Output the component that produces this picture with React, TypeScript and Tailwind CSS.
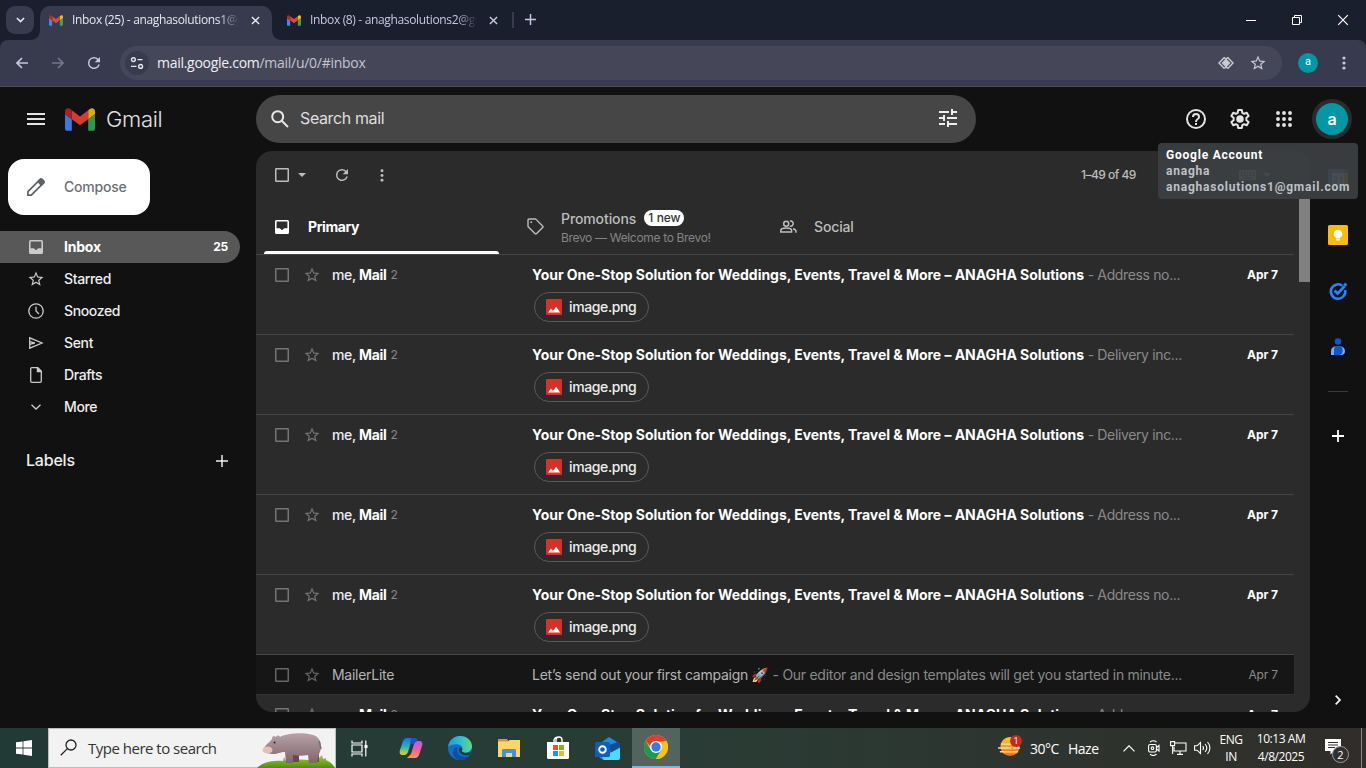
import React from "react";

type IconProps = { className?: string };

const GmailMark = ({ className = "" }: IconProps) => (
  <svg viewBox="52 42 88 66" className={className}>
    <path fill="#4285f4" d="M58 108h14V74L52 59v43c0 3.32 2.69 6 6 6" />
    <path fill="#34a853" d="M120 108h14c3.32 0 6-2.69 6-6V59l-20 15" />
    <path fill="#fbbc04" d="M120 48v26l20-15v-8c0-7.42-8.47-11.65-14.4-7.2" />
    <path fill="#ea4335" d="M72 74V48l24 18 24-18v26L96 92" />
    <path fill="#c5221f" d="M52 51v8l20 15V48l-5.6-4.2c-5.94-4.45-14.4-.22-14.4 7.2" />
  </svg>
);

const Close = ({ className = "" }: IconProps) => (
  <svg viewBox="0 0 10 10" className={className} stroke="currentColor" fill="none">
    <path d="M1 1l8 8M9 1l-8 8" />
  </svg>
);

const Plus = ({ className = "" }: IconProps) => (
  <svg viewBox="0 0 12 12" className={className} fill="none" stroke="currentColor">
    <path d="M6 0v12M0 6h12" />
  </svg>
);

const Reload = ({ className = "" }: IconProps) => (
  <svg viewBox="0 0 24 24" className={className} fill="currentColor">
    <path d="M17.65 6.35A7.96 7.96 0 0 0 12 4a8 8 0 1 0 7.73 10h-2.08A6 6 0 1 1 12 6c1.66 0 3.14.69 4.22 1.78L13 11h7V4z" />
  </svg>
);

const Star = ({ className = "" }: IconProps) => (
  <svg viewBox="0 0 24 24" className={className} fill="currentColor">
    <path d="M22 9.24l-7.19-.62L12 2 9.19 8.63 2 9.24l5.46 4.73L5.82 21 12 17.27 18.18 21l-1.63-7.03zM12 15.4l-3.76 2.27 1-4.28-3.32-2.88 4.38-.38L12 6.1l1.71 4.04 4.38.38-3.32 2.88 1 4.28z" />
  </svg>
);

const Dots = ({ className = "" }: IconProps) => (
  <svg viewBox="0 0 4 14" className={className} fill="currentColor">
    <circle cx="2" cy="2" r="1.6" />
    <circle cx="2" cy="7" r="1.6" />
    <circle cx="2" cy="12" r="1.6" />
  </svg>
);

const InboxIcon = ({ className = "" }: IconProps) => (
  <svg viewBox="0 0 14 14" className={className} fill="currentColor" fillRule="evenodd">
    <path d="M1.5 0h11A1.5 1.5 0 0 1 14 1.5v11a1.5 1.5 0 0 1-1.5 1.5h-11A1.5 1.5 0 0 1 0 12.5v-11A1.5 1.5 0 0 1 1.5 0zM1.6 1.6v6.6h3.2L7 10.2l2.2-2h3.2V1.6z" />
  </svg>
);

const Box = ({ className = "" }: IconProps) => (
  <svg viewBox="0 0 14 14" className={className} fill="none" stroke="currentColor" strokeWidth="1.5">
    <rect x=".75" y=".75" width="12.5" height="12.5" rx=".6" />
  </svg>
);

function BrowserTab({ title, active }: { title: string; active?: boolean }) {
  return (
    <div className={`relative flex items-center pb-[6px] ${active ? "h-[34px] w-[232px] rounded-t-[10px] bg-[#383b4d] pl-[9px]" : "h-[34px] w-[240px] pl-[15px]"}`}>
      {active && (
        <>
          <svg viewBox="0 0 10 10" className="absolute bottom-0 -left-[10px] size-[10px]"><path fill="#383b4d" d="M10 0v10H0C6 10 10 6 10 0z" /></svg>
          <svg viewBox="0 0 10 10" className="absolute -right-[10px] bottom-0 size-[10px]"><path fill="#383b4d" d="M0 0v10h10C4 10 0 6 0 0z" /></svg>
        </>
      )}
      <GmailMark className="h-[11px] w-[14px]" />
      <span className={`ml-[9px] w-[167px] overflow-hidden font-['Open_Sans','Noto_Sans',sans-serif] text-[12px] whitespace-nowrap [mask-image:linear-gradient(to_right,#000_88%,transparent)] tracking-[-0.34px] ${active ? "text-[#e6e7f0]" : "text-[#c5c8e0]"}`}>{title}</span>
      <Close className={`ml-[12px] size-[9px] [stroke-width:1.6] ${active ? "text-[#e6e7f0]" : "text-[#c5c8e0]"}`} />
    </div>
  );
}

function Chrome() {
  return (
    <>
      <div className="flex h-10 shrink-0 items-end bg-[#1a1f2e]">
        <div className="mb-[6px] ml-[6px] flex size-7 items-center justify-center rounded-[9px] bg-[#383b4d]">
          <svg viewBox="0 0 10 6" className="h-[6px] w-[9px]" fill="none" stroke="#e6e7f0" strokeWidth="1.8"><path d="M1 .8l4 4 4-4" /></svg>
        </div>
        <div className="w-[6px]" />
        <BrowserTab title="Inbox (25) - anaghasolutions1@gmail.com" active />
        <BrowserTab title="Inbox (8) - anaghasolutions2@gmail.com" />
        <div className="mb-[12px] h-4 w-[2px] bg-[#383b4d]" />
        <Plus className="mb-[15px] ml-[11px] size-[11px] text-[#c5c8e0] [stroke-width:1.6]" />
        <div className="ml-auto flex h-10 items-center text-white">
          <div className="flex w-[46px] justify-center"><div className="h-px w-[10px] bg-white" /></div>
          <div className="flex w-[46px] justify-center">
            <svg viewBox="0 0 10 10" className="size-[10px]" fill="none" stroke="currentColor"><path d="M.5 2.5h7v7h-7zM2.5 2.5v-2h7v7h-2" /></svg>
          </div>
          <div className="flex w-[46px] justify-center"><Close className="size-3 [stroke-width:1]" /></div>
        </div>
      </div>
      <div className="flex h-[47px] shrink-0 items-center bg-[#1a1f2e]">
        <div className="flex h-full w-full items-center rounded-t-[8px] border-b border-[#4a4c5c] bg-[#383b4d]">
          <svg viewBox="0 0 12 12" className="ml-4 size-3" fill="none" stroke="#c5c8e0" strokeWidth="1.6"><path d="M12 6H1M6 1L1 6l5 5" /></svg>
          <svg viewBox="0 0 12 12" className="ml-6 size-3" fill="none" stroke="#74778b" strokeWidth="1.6"><path d="M0 6h11M6 1l5 5-5 5" /></svg>
          <Reload className="ml-[21px] size-[18px] text-[#c5c8e0]" />
          <div className="ml-[17px] flex h-[34px] w-[1162px] items-center rounded-full bg-[#454759] pr-[15px] pl-[5px]">
            <div className="flex size-6 items-center justify-center rounded-full bg-[#383b4d]">
              <svg viewBox="0 0 14 14" className="size-[14px]" fill="none" stroke="#e6e7f0" strokeWidth="1.4"><circle cx="3.4" cy="3.6" r="1.9" /><path d="M7.5 3.6h5M1 10.4h5.5" /><circle cx="10.6" cy="10.4" r="1.9" /></svg>
            </div>
            <span className="ml-2 pb-px font-['Open_Sans','Noto_Sans',sans-serif] text-[14px] tracking-[-0.28px] text-[#f0f0f5]">mail.google.com<span className="text-[#c3c5cf]">/mail/u/0/#inbox</span></span>
            <svg viewBox="0 0 16 14" className="ml-auto h-[14px] w-4" fill="none" stroke="#c9cad3" strokeWidth="1.4"><path d="M6.3 1.5L1 7l5.300 5.500M9.700 1.500L15 7l-5.300 5.500M6.300 1.500L8 3.200l1.700-1.700M6.300 12.500L8 10.800l1.700 1.700" /><path d="M8 3.500L11.500 7 8 10.500 4.500 7z" fill="#c9cad3" /></svg>
            <Star className="ml-[15px] size-[18px] text-[#c9cad3]" />
          </div>
          <div className="ml-4 flex size-5 items-center justify-center rounded-full bg-[#0097a7] pb-px font-['Roboto',sans-serif] text-[11px] text-white">a</div>
          <Dots className="ml-6 h-[14px] w-1 text-[#c5c8e0]" />
        </div>
      </div>
    </>
  );
}

function Header() {
  return (
    <header className="flex h-16 shrink-0 items-center">
      <svg viewBox="0 0 18 12" className="ml-[27px] h-3 w-[18px]" fill="#e3e3e3"><path d="M0 0h18v2H0zM0 5h18v2H0zM0 10h18v2H0z" /></svg>
      <GmailMark className="ml-5 h-[23px] w-[30px] brightness-90" />
      <span className="ml-[11px] w-[150px] font-['Inter',sans-serif] text-[22px] leading-none font-light tracking-[-0.3px] text-[#e3e3e3]">Gmail</span>
      <div className="flex h-12 w-[720px] items-center rounded-full bg-[#464646] pr-[19px] pl-[15px]">
        <svg viewBox="0 0 18 18" className="size-[18px]" fill="none" stroke="#e8e8e8" strokeWidth="2"><circle cx="6.700" cy="6.700" r="5.500" /><path d="M10.700 10.700L17 17" /></svg>
        <span className="ml-[11px] pb-[2px] font-['Inter',sans-serif] text-[16px] tracking-[-0.38px] text-[#dedede]">Search mail</span>
        <svg viewBox="0 0 18 18" className="mb-[2px] ml-auto size-[18px]" fill="#eee"><path d="M0 14v2h6v-2zM0 2v2h10V2zM10 18v-2h8v-2h-8v-2H8v6zM4 6v2H0v2h4v2h2V6zM18 10V8H8v2zM12 6h2V4h4V2h-4V0h-2z" /></svg>
      </div>
      <div className="ml-auto flex items-center pr-[14px] text-[#e3e3e3]">
        <svg viewBox="2 2 20 20" className="size-5" fill="currentColor"><path d="M11 18h2v-2h-2zm1-16a10 10 0 1 0 0 20 10 10 0 0 0 0-20m0 18a8 8 0 1 1 0-16 8 8 0 0 1 0 16m0-14a4 4 0 0 0-4 4h2a2 2 0 1 1 4 0c0 2-3 1.750-3 5h2c0-2.250 3-2.500 3-5a4 4 0 0 0-4-4" /></svg>
        <svg viewBox="0 0 24 24" className="ml-[22px] size-6" fill="none" stroke="currentColor" strokeWidth="2">
          <path strokeLinejoin="round" d="M10.200 2.500h3.600l.5 2.800 1.800 1 2.700-1 1.800 3.200-2.200 1.800v2.400l2.200 1.800-1.800 3.200-2.700-1-1.800 1-.5 2.800h-3.600l-.5-2.800-1.800-1-2.700 1-1.800-3.200 2.200-1.800v-2.400L3.400 8.500l1.800-3.200 2.700 1 1.800-1z" transform="translate(0 .5)" />
          <circle cx="12" cy="12" r="2.800" fill="currentColor" />
        </svg>
        <svg viewBox="0 0 16 16" className="ml-6 size-4" fill="currentColor">
          {[2, 8, 14].map((y) => [2, 8, 14].map((x) => <circle key={`${x}-${y}`} cx={x} cy={y} r="1.950" />))}
        </svg>
        <div className="ml-5 flex size-10 items-center justify-center rounded-full bg-[#2b2b2b]">
          <div className="flex size-8 items-center justify-center rounded-full bg-[#0097a7] pb-px font-['Inter',sans-serif] text-[16px] font-semibold text-white">a</div>
        </div>
      </div>
    </header>
  );
}

const navItems: { label: string; icon: React.ReactNode; count?: string }[] = [
  { label: "Inbox", count: "25", icon: <InboxIcon className="size-[14px]" /> },
  { label: "Starred", icon: <Star className="size-[18px]" /> },
  { label: "Snoozed", icon: <svg viewBox="0 0 16 16" className="size-4" fill="none" stroke="currentColor" strokeWidth="1.300"><circle cx="8" cy="8" r="7.200" /><path d="M8 3.500V8l3 3" /></svg> },
  { label: "Sent", icon: <svg viewBox="0 0 16 14" className="h-[14px] w-4" fill="none" stroke="currentColor" strokeWidth="1.300"><path d="M1.700 1.800v10.400L14 7zM1.700 5.700L6.800 7l-5.100 1.300" /></svg> },
  { label: "Drafts", icon: <svg viewBox="0 0 12 16" className="h-4 w-3" fill="none" stroke="currentColor" strokeWidth="1.300"><path d="M1.800.700h6l3.500 3.500v9.900c0 .6-.4 1.200-1.100 1.200H1.800c-.7 0-1.100-.5-1.100-1.200V1.800C.7 1.100 1.200.7 1.800.7z" /><path d="M7.400.7v3.900h3.900z" fill="currentColor" /></svg> },
  { label: "More", icon: <svg viewBox="0 0 10 6" className="h-[6px] w-[10px]" fill="none" stroke="currentColor" strokeWidth="1.300"><path d="M.5.7L5 5 9.500.7" /></svg> },
];

function Sidebar() {
  return (
    <aside className="w-64 shrink-0 pt-2 font-['Inter',sans-serif]">
      <div className="ml-2 flex h-14 w-[142px] items-center rounded-2xl bg-white pl-[19px]">
        <svg viewBox="0 0 18 18" className="size-[18px]" fill="none" stroke="#5f6368" strokeWidth="1.700"><path d="M.900 17.100v-3.400L13.200 1.400a1.400 1.400 0 0 1 2 0l1.400 1.400a1.400 1.400 0 0 1 0 2L4.300 17.100z" /><path fill="#5f6368" d="M11 3.600L13.600 1l3.400 3.400L14.400 7z" /></svg>
        <span className="ml-[19px] pb-[2px] text-[14px] font-medium tracking-[-0.2px] text-[#6b6f73]">Compose</span>
      </div>
      <nav className="mt-4">
        {navItems.map((item, i) => (
          <div key={item.label} className={`flex h-8 w-60 items-center rounded-r-full pr-3 ${i === 0 ? "bg-[#585858]" : ""}`}>
            <span className="ml-[26px] flex w-5 justify-center text-[#cacaca]">{item.icon}</span>
            <span className={`ml-[18px] pb-[2px] text-[14px] ${i === 0 ? "font-bold tracking-[-0.2px] text-white" : "font-medium tracking-[-0.35px] text-[#eee]"}`}>{item.label}</span>
            {item.count && <span className="ml-auto text-[12px] font-bold tracking-[-0.2px] text-white">{item.count}</span>}
          </div>
        ))}
      </nav>
      <div className="mt-[26px] flex h-[24px] items-center pr-7 pl-[26px] text-[#eee]">
        <span className="pb-[2px] text-[16px] font-medium tracking-[-0.2px]">Labels</span>
        <Plus className="ml-auto size-3 [stroke-width:1.500]" />
      </div>
    </aside>
  );
}

function MailTabs() {
  return (
    <div className="flex h-14 shrink-0 border-b border-[#454545] text-[#bdbdbd]">
      <div className="flex w-[253px] flex-col pl-2">
        <div className="flex h-[53px] w-[235px] items-center pt-[3px] pl-[11px] text-white">
          <InboxIcon className="size-[14px]" />
          <span className="ml-[19px] text-[14px] font-bold tracking-[-0.4px]">Primary</span>
        </div>
        <div className="h-[3px] w-[235px] shrink-0 rounded-t-[3px] bg-white" />
      </div>
      <div className="flex w-[253px] items-center pl-[18px]">
        <svg viewBox="0 0 17 17" className="size-[17px]" fill="none" stroke="currentColor" strokeWidth="1.400"><path d="M1 2.200C1 1.500 1.500 1 2.200 1h6c.4 0 .7.100.9.400l6.500 6.500c.5.500.5 1.200 0 1.700l-6 6c-.5.500-1.200.500-1.700 0L1.400 9.100A1.200 1.200 0 0 1 1 8.200z" /><circle cx="4.200" cy="4.200" r=".9" fill="currentColor" stroke="none" /></svg>
        <div className="ml-[17px] pt-[3px]">
          <div className="flex h-5 items-center text-[14px] font-medium tracking-[-0.1px]">Promotions
            <span className="ml-2 flex h-4 items-center rounded-full bg-white px-1 text-[12px] tracking-[-0.25px] [word-spacing:1px] text-[#333]">1 new</span>
          </div>
          <div className="h-5 text-[12px] leading-5 tracking-[-0.33px] text-[#858585]">Brevo — Welcome to Brevo!</div>
        </div>
      </div>
      <div className="flex items-center pl-[18px]">
        <svg viewBox="0 0 17 13" className="h-[13px] w-[17px]" fill="none" stroke="currentColor" strokeWidth="1.500"><circle cx="6.200" cy="3.700" r="2.500" /><path d="M.8 12V10.600c0-1.600 3-2.500 5.400-2.500s5.400.9 5.400 2.500V12zM9.800 1c2.600-.4 3.600 1.400 3.300 3-.2 1.300-1.400 2.400-3.300 2.200M13 8.700c1.800.5 2.900 1.100 2.900 2.200v1.800" /></svg>
        <span className="ml-[17px] text-[14px] font-medium tracking-[-0.15px]">Social</span>
      </div>
    </div>
  );
}

function ThreadRow({ snippet }: { snippet: string }) {
  return (
    <div className="flex h-20 shrink-0 border-b border-[#454545] pt-[10px] pr-4 pl-[19px]">
      <div className="flex h-5 w-[257px] shrink-0 items-center text-[#757575]">
        <Box className="size-[14px]" />
        <Star className="ml-[14px] size-[18px]" />
        <span className="ml-[11px] pb-[2px] text-[14px] font-medium tracking-[-0.36px] text-[#eee]">me, <b className="text-white">Mail</b></span>
        <span className="ml-1 text-[12px] text-[#8a8a8a]">2</span>
      </div>
      <div className="flex-1">
        <div className="h-5 w-[655px] text-[14px] leading-5 whitespace-nowrap text-[#8a8a8a]"><b className="tracking-[-0.037px] text-white">Your One-Stop Solution for Weddings, Events, Travel &amp; More – ANAGHA Solutions</b><span className="tracking-[-0.36px]"> - {snippet}</span></div>
        <div className="mt-[7px] ml-[2px] flex h-[30px] w-[115px] items-center rounded-full border border-[#5a5a5a] pl-[11px]">
          <svg viewBox="0 0 16 16" className="size-4"><rect width="16" height="16" rx="1" fill="#d93025" /><path fill="#fff" d="M2 13.500l3-4 2 2.200 3.200-4 4 5.800z" /></svg>
          <span className="ml-[7px] pb-[2px] text-[14px] font-medium tracking-[-0.38px] text-[#eee]">image.png</span>
        </div>
      </div>
      <span className="h-5 text-[12px] leading-5 font-bold tracking-[-0.05px] text-white">Apr 7</span>
    </div>
  );
}

function MailPanel() {
  return (
    <main className="flex h-[561px] w-[1054px] shrink-0 overflow-hidden rounded-2xl bg-[#2b2b2b] font-['Inter',sans-serif]">
      <div className="flex w-[1038px] flex-col">
        <div className="flex h-12 shrink-0 items-center pl-[19px] text-[#bdbdbd]">
          <Box className="size-[14px]" />
          <svg viewBox="0 0 8 4" className="ml-[9px] h-1 w-2" fill="currentColor"><path d="M0 0h8L4 4z" /></svg>
          <Reload className="ml-[27px] size-[18px]" />
          <Dots className="ml-[29px] h-[13px] w-1" />
          <span className="ml-auto w-[57px] text-[12px] font-medium tracking-[-0.52px] whitespace-nowrap">1–49 of 49</span>
          <svg viewBox="0 0 6 10" className="ml-[31px] h-[10px] w-[6px]" fill="none" stroke="#555"><path d="M5 1L1 5l4 4" /></svg>
          <svg viewBox="0 0 6 10" className="ml-[34px] h-[10px] w-[6px]" fill="none" stroke="#555"><path d="M1 1l4 4-4 4" /></svg>
          <svg viewBox="0 0 32 10" className="mr-[23px] ml-6 h-[10px] w-8" fill="#bdbdbd"><path fillRule="evenodd" d="M0 0h17v10H0zM2 2v1.500h1.500V2zm3 0v1.500h1.500V2zm3 0v1.500h1.500V2zm3 0v1.500h1.500V2zm3 0v1.500h1.500V2zM2 4.500V6h1.500V4.500zm3 0V6h1.500V4.500zm3 0V6h1.500V4.500zm3 0V6h1.500V4.500zm3 0V6h1.500V4.500zM4 7.300v1.200h9V7.300zM24 3h8l-4 4z" /></svg>
        </div>
        <MailTabs />
        <div className="h-[457px] overflow-hidden">
          <ThreadRow snippet="Address no..." />
          <ThreadRow snippet="Delivery inc..." />
          <ThreadRow snippet="Delivery inc..." />
          <ThreadRow snippet="Address no..." />
          <ThreadRow snippet="Address no..." />
          <div className="flex h-10 items-center border-b border-[#333] bg-[#161616] pr-4 pl-[19px] text-[14px] text-[#b4b4b4]">
            <Box className="size-[14px] text-[#666]" />
            <Star className="ml-[14px] size-[18px] text-[#666]" />
            <span className="ml-[11px] w-[200px] tracking-[-0.28px]">MailerLite</span>
            <span className="whitespace-nowrap tracking-[-0.245px]">Let’s send out your first campaign <span className="font-['Noto_Color_Emoji',sans-serif]">🚀</span><span className="tracking-[-0.285px] text-[#8a8a8a]"> - Our editor and design templates will get you started in minute...</span></span>
            <span className="ml-auto text-[12px] tracking-[-0.15px] text-[#8a8a8a]">Apr 7</span>
          </div>
          <ThreadRow snippet="Address no..." />
        </div>
      </div>
      <div className="ml-[5px] w-[11px] pt-12"><div className="h-[83px] bg-[#808080]" /></div>
    </main>
  );
}

function SideRail() {
  return (
    <div className="flex w-14 flex-col items-center pt-[18px] pb-[23px]">
      <svg viewBox="0 0 20 20" className="size-5"><path fill="#4285f4" d="M0 1.500Q0 0 1.500 0H16v4H4v12H0z" /><path fill="#fbbc04" d="M16 4h4v12h-4z" /><path fill="#1967d2" d="M16 0h2.500Q20 0 20 1.500V4h-4z" /><path fill="#34a853" d="M4 16h12v4H4z" /><path fill="#188038" d="M0 16h4v4H1.500Q0 20 0 18.500z" /><path fill="#ea4335" d="M16 16h4l-4 4z" /><path fill="#fff" d="M4 4h12v12H4z" /><text x="10" y="13.500" textAnchor="middle" fontSize="9.500" fontWeight="700" fontFamily="Roboto" fill="#4285f4">31</text></svg>
      <svg viewBox="0 0 20 20" className="mt-9 size-5"><rect width="20" height="20" rx="1.500" fill="#fbbc04" /><circle cx="10" cy="9" r="4.300" fill="#fff" /><path fill="#fff" d="M8 11h4v2.500H8zM8 14.200h4v1.300H8z" /></svg>
      <svg viewBox="0 0 20 20" className="mt-9 size-5" fill="none" stroke="#2684fc"><path strokeWidth="2.600" d="M14.300 4.700a7.200 7.200 0 1 0 2.800 4.300" /><path strokeWidth="2.800" d="M6.600 9.600l3 3 7-7.400" /><circle cx="17.300" cy="3.700" r="1.300" fill="#2684fc" /></svg>
      <svg viewBox="0 0 20 20" className="mt-9 size-5"><circle cx="10" cy="4.500" r="3.300" fill="#0b57d0" /><path fill="#7baaf7" d="M3 18v-4a4.500 4.500 0 0 1 4.500-4.500h5A4.500 4.500 0 0 1 17 14a4 4 0 0 1-4 4z" /><path fill="#0b57d0" d="M6 18v-5.500c0-2 1-3 2.500-3h3c2 0 3.200 1.500 3.200 4s-1.400 4.500-3.700 4.500z" /></svg>
      <div className="mt-[34px] h-px w-5 bg-[#3a3a3a]" />
      <Plus className="mt-[38px] size-3 text-white [stroke-width:1.800]" />
      <svg viewBox="0 0 6 10" className="mt-auto h-[10px] w-[6px]" fill="none" stroke="#eee" strokeWidth="1.800"><path d="M.7.700L5 5 .7 9.300" /></svg>
    </div>
  );
}

const Hippo = () => (
  <svg viewBox="0 0 78 38" className="h-[38px] w-[78px]">
    <defs>
      <linearGradient id="hide" x1="0" y1="0" x2="0" y2="1"><stop offset="0" stopColor="#b8a2a9" /><stop offset="1" stopColor="#80646c" /></linearGradient>
      <linearGradient id="grass" x1="0" y1="0" x2="0" y2="1"><stop offset="0" stopColor="#a9cf2b" /><stop offset="1" stopColor="#4c8c12" /></linearGradient>
    </defs>
    <path fill="url(#grass)" d="M0 38c6-6 16-8 26-7l1-4 2 4 4-2 20 1 9-2 3-3 1 4 3-1v2c4 2 7 4 9 8z" />
    <path fill="#654b51" d="M36 23h6v9h-6zM58 22h4v10h-4z" />
    <path fill="url(#hide)" d="M7 19c0-3 4-5 8-10 0-2 1-3 2-3s1 1 2 1c1-2 3-2 4 0C32 2 54 2 60 7c5 4 5 12 2 17l-2 9h-8l-1-8c-5 1-10 1-15 0v8h-7l-1-11c-5 0-7 2-11 2-5 0-10-1-10-5z" />
    <ellipse cx="10.500" cy="20" rx="5" ry="3.600" fill="#e3c0b6" />
    <circle cx="17.500" cy="12.500" r="1" fill="#2e2225" /><path d="M62 11l2 8" stroke="#886c73" strokeWidth="1.500" />
  </svg>
);

function Taskbar() {
  return (
    <footer className="flex h-10 shrink-0 items-center bg-linear-to-r from-[#213a36] via-[#293c35] to-[#302d2a] font-['Open_Sans','Noto_Sans',sans-serif] text-white">
      <svg viewBox="0 0 16 16" className="mx-4 size-4" fill="#fff"><path d="M0 2.300L6.600 1.400v6.200H0zM7.400 1.300L16 0v7.600H7.400zM0 8.400h6.600v6.200L0 13.700zM7.400 8.400H16V16l-8.600-1.300z" /></svg>
      <div className="flex h-10 w-72 items-end border border-[#bdbdbd] bg-[#f2f2f2] pl-[11px]">
        <svg viewBox="0 0 17 17" className="mb-[11px] size-[17px]" fill="none" stroke="#222" strokeWidth="1.300"><circle cx="11" cy="6" r="5" /><path d="M7.400 9.600L.8 16.200" /></svg>
        <span className="mb-[8px] ml-[11px] text-[15px] tracking-[-0.5px] whitespace-nowrap text-[#333]">Type here to search</span>
        <div className="-mb-px ml-auto"><Hippo /></div>
      </div>
      <svg viewBox="0 0 17 16" className="ml-[15px] size-[17px]" fill="none" stroke="#fff" strokeWidth="1.200"><path d="M1 0v2.500h10V0M1 4.500h10v7H1zM1 16v-2.500h10V16M14.800 0v16" /><path fill="#fff" d="M13.500 4.500h3v3h-3z" stroke="none" /></svg>
      <div className="ml-[19px] flex items-center">
        <div className="flex w-[49px] justify-center pr-[2px]">
          <svg viewBox="0 0 24 22" className="h-[22px] w-6">
            <defs><linearGradient id="cpa" x1="0" y1="0" x2="0" y2="1"><stop stopColor="#1a6fe8" /><stop offset=".5" stopColor="#22b7b5" /><stop offset="1" stopColor="#f0d020" /></linearGradient><linearGradient id="cpb" x1="0" y1="0" x2="0" y2="1"><stop stopColor="#b45cf2" /><stop offset=".5" stopColor="#f2609a" /><stop offset="1" stopColor="#fb9b4a" /></linearGradient></defs>
            <path fill="url(#cpa)" d="M8 1h8l-4 4-3 10c-1 2-2 3-4 3H4c-3 0-4-2-3-5l3-9c1-2 2-3 4-3z" />
            <path fill="url(#cpb)" d="M16 21H8l4-4 3-10c1-2 2-3 4-3h1c3 0 4 2 3 5l-3 9c-1 2-2 3-4 3z" />
            <path fill="#1756c8" d="M12 1h4c2 0 2 2 3 3-3 0-3 1-4 3h-4z" />
          </svg>
        </div>
        <div className="flex w-[49px] justify-center pr-[2px]">
          <svg viewBox="0 0 24 24" className="size-6">
            <defs><linearGradient id="ea" x1="0" y1="0" x2="1" y2="0"><stop stopColor="#1b9de2" /><stop offset=".6" stopColor="#35c1d0" /><stop offset="1" stopColor="#62de6a" /></linearGradient></defs>
            <circle cx="12" cy="12" r="12" fill="#0f6fc6" />
            <path fill="url(#ea)" d="M0 11C1 4 6 0 12 0c7 0 12 5 12 10 0 4-3 6.500-6.500 6.500-3 0-4.500-1-3.500-2.500 1-2 0-5-4-5.500C6 8 2 9 0 11z" />
            <path fill="#0c4f9c" d="M9 12c-1 5 3 9 8 9 2 0 4-1 5-2-2 3-6 5-10 5-5-1-8-5-7-9 1-3 3-4 5-4z" />
            <path fill="#283c36" d="M14.500 13.500c-1.500 1-.5 3.500 4 3.500 2 0 3.500-.700 4.500-1.700l-1 3.200c-5 2.500-11-.5-11-4.500 0-2 1.500-3 3-2z" />
          </svg>
        </div>
        <div className="flex w-[49px] justify-center pr-[2px]">
          <svg viewBox="0 0 22 18" className="h-[18px] w-[22px]"><path fill="#d99a12" d="M0 0h9l2 3H0z" /><path fill="#ffd766" d="M0 2.500h10L11.500 1H22v17H0z" /><path fill="#3f93dc" d="M4 18v-6.500C4 10.500 4.500 10 5.500 10h11c1 0 1.500.5 1.500 1.500V18h-4v-4H8v4z" /></svg>
        </div>
        <div className="flex w-[49px] justify-center pr-[2px]">
          <svg viewBox="0 0 24 24" className="size-6"><path d="M8 7V4a3 3 0 0 1 4-2.500M16 7V4a3 3 0 0 0-6 0v3" fill="none" stroke="#fff" strokeWidth="1.400" /><path fill="#fff" d="M1 6h22v15.500a1.500 1.500 0 0 1-1.500 1.500h-19A1.500 1.500 0 0 1 1 21.500z" /><path fill="#f25022" d="M7 9h5v5H7z" /><path fill="#7fba00" d="M13 9h5v5h-5z" /><path fill="#00a4ef" d="M7 15h5v5H7z" /><path fill="#ffb900" d="M13 15h5v5h-5z" /></svg>
        </div>
        <div className="flex w-[49px] justify-center pr-px">
          <svg viewBox="0 0 25 23" className="h-[23px] w-[25px]"><path fill="#1490df" d="M4 7L14 0l11 7v14l-2 2H8l-4-3z" /><path fill="#0a4f9e" d="M14 8l9-3 2 2v3l-9 6z" /><path fill="#50d9ff" d="M7 20l18-9v10a2 2 0 0 1-2 2H9z" /><rect y="5" width="15" height="15" rx="1.500" fill="#0f5fb8" /><circle cx="7.500" cy="12.500" r="3.300" fill="none" stroke="#fff" strokeWidth="1.900" /></svg>
        </div>
        <div className="flex h-10 w-12 items-center justify-center border-b-2 border-[#76b9ed] bg-[#53645f]">
          <svg viewBox="0 0 24 24" className="size-6"><circle cx="12" cy="12" r="12" fill="#fbc116" /><path fill="#e33b2e" d="M1.600 6A12 12 0 0 1 22.400 6H12v12z" /><path fill="#1f9a4d" d="M1.600 6A12 12 0 0 0 12 24l5.200-9L12 12 7 15z" /><path fill="#fbc116" d="M12 24l5.200-9V6h5.200A12 12 0 0 1 12 24z" /><path fill="#e33b2e" d="M12 6h10.400L12 7z" /><circle cx="12" cy="12" r="6" fill="#fff" /><circle cx="12" cy="12" r="4.700" fill="#2f7cf0" /></svg>
        </div>
      </div>
      <div className="ml-auto flex h-full items-center">
        <div className="relative mr-[9px] mb-1">
          <svg viewBox="0 0 23 22" className="h-[21px] w-[23px]"><defs><linearGradient id="sun" x1="0" y1="0" x2="0" y2="1"><stop stopColor="#ffc928" /><stop offset="1" stopColor="#f36c13" /></linearGradient></defs><circle cx="12" cy="11" r="10" fill="url(#sun)" /><path d="M3 8.500h12M0 12.500h13M16 12.500h6M2 16.500h18" stroke="#f7dfac" strokeWidth="1.500" strokeLinecap="round" /></svg>
          <span className="absolute -top-px left-[12px] flex size-3 items-center justify-center rounded-full bg-[#c42b1c] text-[9px] leading-none">1</span>
        </div>
        <span className="w-[38px] text-[14px] tracking-[-0.5px]">30°C</span>
        <span className="w-[55px] text-[14px] tracking-[-0.5px]">Haze</span>
        <svg viewBox="0 0 12 7" className="h-[7px] w-3" fill="none" stroke="#fff" strokeWidth="1.200"><path d="M.5 6.300L6 .8l5.500 5.500" /></svg>
        <svg viewBox="0 0 12 16" className="ml-[13px] h-4 w-3" fill="none" stroke="#fff" strokeWidth="1.100"><rect x=".6" y="4.500" width="7.800" height="7.500" rx="1.500" /><path d="M8.500 7.500l2.500-2v5.500l-2.500-2M2 2C4 .5 6.500.5 8.500 2M2 14.300c2 1.500 4.500 1.500 6.500 0" /><circle cx="4.500" cy="8.200" r="1.300" /></svg>
        <svg viewBox="0 0 17 14" className="ml-[10px] h-[14px] w-[17px]" fill="none" stroke="#fff" strokeWidth="1.100"><path d="M5 2h11v8H4V6M10 10v3M7 13.400h6M.6.600h4v4h-4zM2.600 4.600v8.400" /></svg>
        <svg viewBox="0 0 17 14" className="ml-[7px] h-[14px] w-[17px]" fill="none" stroke="#fff" strokeWidth="1.100"><path d="M.6 4.800h2.500L6.500 1.500v11L3.100 9.200H.6zM8.700 5c1 1.200 1 2.800 0 4M11 3c2.200 2.400 2.200 5.600 0 8M13.500 1c3.200 3.500 3.200 8.500 0 12" /></svg>
        <div className="ml-[5px] flex w-[30px] flex-col items-center text-[12px] leading-[17px] tracking-[-0.5px]"><span>ENG</span><span>IN</span></div>
        <div className="ml-[8px] flex w-[54px] flex-col items-center text-[12px] leading-[18px] tracking-[-0.45px] whitespace-nowrap"><span>10:13 AM</span><span>4/8/2025</span></div>
        <div className="relative mr-[12px] ml-[17px] h-6 w-6">
          <svg viewBox="0 0 16 16" className="mt-[3px] size-4"><path fill="#fff" d="M0 0h16v12H9l-3.500 3.500V12H0z" /><path d="M3 3.500h10M3 6h10M3 8.500h7" stroke="#302e2b" /></svg>
          <span className="absolute top-[10px] left-[7px] flex size-[17px] items-center justify-center rounded-full border border-[#999] bg-[#303030] text-[11px] leading-none">2</span>
        </div>
        <div className="mr-1 h-full w-px bg-[#888]" />
      </div>
    </footer>
  );
}

export default function App() {
  return (
    <div className="relative flex h-[768px] w-[1366px] flex-col overflow-hidden bg-[#111111]">
      <Chrome />
      <Header />
      <div className="flex h-[577px] shrink-0">
        <Sidebar />
        <MailPanel />
        <SideRail />
      </div>
      <Taskbar />
      <div className="absolute top-[143px] left-[1158px] h-14 w-[200px] rounded-[4px] bg-[#3c4043]/93 pt-1 pl-2 font-['Roboto',sans-serif] text-[12px] leading-4 font-bold tracking-[0.78px] whitespace-nowrap text-[#bdc1c6]">
        <div className="text-white">Google Account</div>
        <div>anagha</div>
        <div>anaghasolutions1@gmail.com</div>
      </div>
    </div>
  );
}
